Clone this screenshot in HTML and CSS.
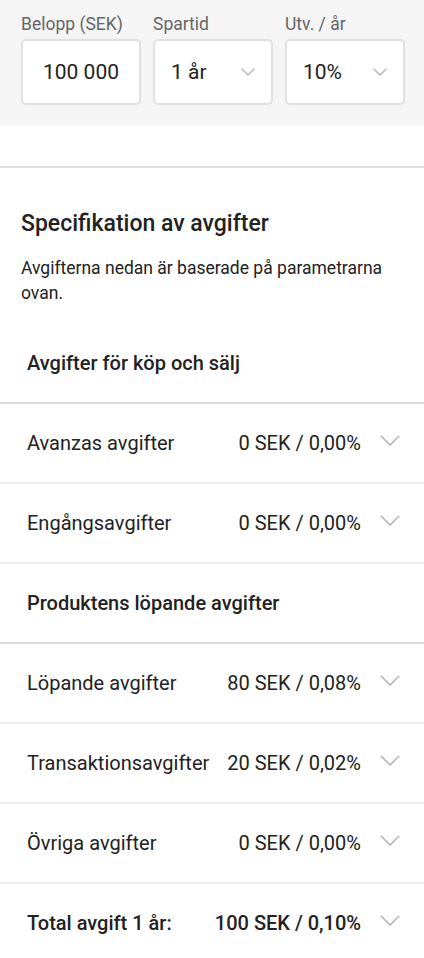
FILE: index.html
```html
<!DOCTYPE html>
<html lang="sv">
<head>
<meta charset="utf-8">
<link rel="stylesheet" href="styles.css">
</head>
<body>
<div class="params">
  <div class="field">
    <div class="label">Belopp (SEK)</div>
    <div class="box center">100 000</div>
  </div>
  <div class="field">
    <div class="label">Spartid</div>
    <div class="box select"><span>1 år</span>
      <svg class="chev-sm" width="14" height="8" viewBox="0 0 14 8"><polyline points="0.7,0.7 7,7 13.3,0.7" fill="none" stroke="#b3b3b3" stroke-width="1.3"/></svg>
    </div>
  </div>
  <div class="field">
    <div class="label">Utv. / år</div>
    <div class="box select"><span>10%</span>
      <svg class="chev-sm" width="14" height="8" viewBox="0 0 14 8"><polyline points="0.7,0.7 7,7 13.3,0.7" fill="none" stroke="#b3b3b3" stroke-width="1.3"/></svg>
    </div>
  </div>
</div>
<div class="spacer"></div>
<div class="intro">
  <h2 class="title">Specifikation av avgifter</h2>
  <p class="desc">Avgifterna nedan är baserade på parametrarna ovan.</p>
</div>
<div class="fees">
  <div class="section">Avgifter för köp och sälj</div>
  <div class="row"><span class="name">Avanzas avgifter</span><span class="val">0 SEK / 0,00%</span><svg class="chev" width="20" height="11" viewBox="0 0 20 11"><polyline points="0.8,0.8 10,10 19.2,0.8" fill="none" stroke="#b3b3b3" stroke-width="1.5"/></svg></div>
  <div class="row"><span class="name">Engångsavgifter</span><span class="val">0 SEK / 0,00%</span><svg class="chev" width="20" height="11" viewBox="0 0 20 11"><polyline points="0.8,0.8 10,10 19.2,0.8" fill="none" stroke="#b3b3b3" stroke-width="1.5"/></svg></div>
  <div class="section">Produktens löpande avgifter</div>
  <div class="row"><span class="name">Löpande avgifter</span><span class="val">80 SEK / 0,08%</span><svg class="chev" width="20" height="11" viewBox="0 0 20 11"><polyline points="0.8,0.8 10,10 19.2,0.8" fill="none" stroke="#b3b3b3" stroke-width="1.5"/></svg></div>
  <div class="row"><span class="name">Transaktionsavgifter</span><span class="val">20 SEK / 0,02%</span><svg class="chev" width="20" height="11" viewBox="0 0 20 11"><polyline points="0.8,0.8 10,10 19.2,0.8" fill="none" stroke="#b3b3b3" stroke-width="1.5"/></svg></div>
  <div class="row"><span class="name">Övriga avgifter</span><span class="val">0 SEK / 0,00%</span><svg class="chev" width="20" height="11" viewBox="0 0 20 11"><polyline points="0.8,0.8 10,10 19.2,0.8" fill="none" stroke="#b3b3b3" stroke-width="1.5"/></svg></div>
  <div class="row total"><span class="name">Total avgift 1 år:</span><span class="val">100 SEK / 0,10%</span><svg class="chev" width="20" height="11" viewBox="0 0 20 11"><polyline points="0.8,0.8 10,10 19.2,0.8" fill="none" stroke="#b3b3b3" stroke-width="1.5"/></svg></div>
</div>
</body>
</html>
```
FILE: styles.css
```css
* { box-sizing: border-box; }
html, body { margin: 0; padding: 0; background: #fff; }
body {
  font-family: Roboto, "Noto Sans", sans-serif;
  color: #222;
  width: 424px;
  overflow: hidden;
}
.params {
  background: #f5f5f5;
  display: grid;
  grid-template-columns: 120px 120px 120px;
  column-gap: 12px;
  padding: 14px 0 21px 21px;
  height: 126px;
}
.label {
  font-size: 17.5px;
  line-height: 20px;
  color: #666;
  margin-bottom: 5px;
}
.box {
  height: 66px;
  background: #fff;
  border: 2px solid #e0e0e0;
  border-radius: 5px;
  font-size: 21px;
  color: #222;
  display: flex;
  align-items: center;
}
.box.center { justify-content: center; }
.box.select {
  justify-content: space-between;
  padding: 0 16px 0 16px;
}
.chev-sm { display: block; margin-top: 0; }
.spacer {
  height: 42px;
  border-bottom: 2px solid #e0e0e0;
}
.intro {
  padding: 42px 21px 0 21px;
}
.title {
  margin: 0;
  font-size: 23px;
  line-height: 28px;
  font-weight: 500;
  color: #222;
}
.desc {
  margin: 18px 0 0 0;
  font-size: 17.5px;
  line-height: 25px;
  color: #222;
}
.fees { margin-top: 18px; }
.section {
  height: 80px;
  display: flex;
  align-items: center;
  padding-left: 27px;
  font-size: 20px;
  font-weight: 500;
  color: #222;
  border-bottom: 2px solid #dcdcdc;
}
.row {
  height: 80px;
  display: flex;
  align-items: center;
  padding: 0 24px 0 27px;
  font-size: 20px;
  color: #222;
  border-bottom: 2px solid #efefef;
}
.row .name { flex: 1; }
.row .val { margin-right: 19px; }
.row .chev { display: block; margin-top: -6px; }
.row.total { font-weight: 500; }
```
